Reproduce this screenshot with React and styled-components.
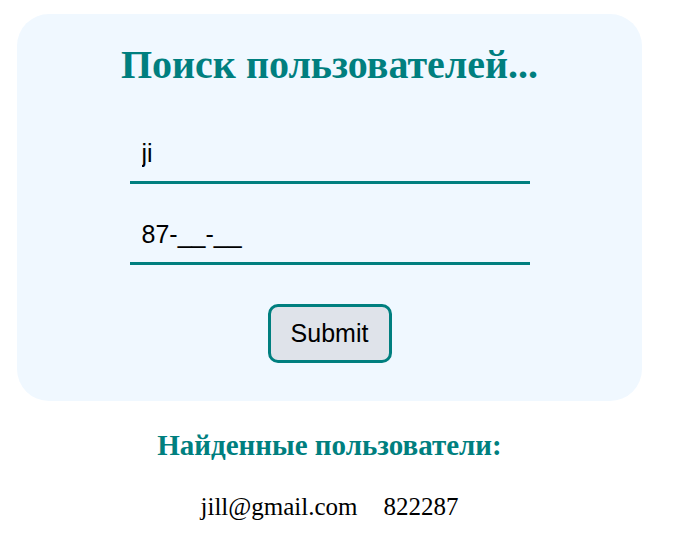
import styled, { createGlobalStyle } from "styled-components";

const GlobalStyle = createGlobalStyle`
    body {
        margin: 0;
        background: #ffffff;
        font-family: "Liberation Serif", "Times New Roman", serif;
    }
`;

const Page = styled.div`
    width: 625px;
    padding: 14px 0 0 17px;
`;

const SearchCard = styled.form`
    display: flex;
    flex-direction: column;
    align-items: center;
    background-color: #f0f8ff;
    border-radius: 32px;
    padding: 28px 0 38px;
`;

const Title = styled.h1`
    margin: 0 0 43px;
    color: #007f7f;
    font-size: 40px;
    font-weight: 700;
    line-height: 46px;
`;

const Field = styled.input`
    box-sizing: border-box;
    width: 400px;
    height: 53px;
    margin-bottom: ${(p) => p.$gap}px;
    padding: 8px 12px 13px;
    border: none;
    border-bottom: 3px solid #007f7f;
    background: transparent;
    color: #000;
    font-family: "Liberation Sans", Arial, sans-serif;
    font-size: 25px;
    outline: none;
`;

const SubmitButton = styled.button`
    box-sizing: border-box;
    width: 124px;
    height: 59px;
    border: 3px solid #007f7f;
    border-radius: 10px;
    background-color: #dfe3ea;
    color: #000;
    font-family: "Liberation Sans", Arial, sans-serif;
    font-size: 25px;
    cursor: pointer;
`;

const Results = styled.div`
    display: flex;
    flex-direction: column;
    align-items: center;
`;

const ResultsTitle = styled.h3`
    margin: 26px 0 0;
    color: #007f7f;
    font-size: 29px;
    font-weight: 700;
    line-height: 36px;
`;

const UserRow = styled.div`
    display: flex;
    gap: 26px;
    margin-top: 29px;
    font-size: 25px;
    line-height: 29px;
    color: #000;
`;

const users = [{ email: "jill@gmail.com", number: "822287" }];

const App = () => {
    return (
        <Page>
            <GlobalStyle />
            <SearchCard onSubmit={(e) => e.preventDefault()}>
                <Title>Поиск пользователей...</Title>
                <Field type="text" name="email" defaultValue="ji" $gap={28} />
                <Field type="text" name="number" defaultValue="87-__-__" $gap={39} />
                <SubmitButton type="submit">Submit</SubmitButton>
            </SearchCard>
            <Results>
                <ResultsTitle>Найденные пользователи:</ResultsTitle>
                {users.map((u, idx) => (
                    <UserRow key={'user-idx' + idx}>
                        <span>{u.email}</span>
                        <span>{u.number}</span>
                    </UserRow>
                ))}
            </Results>
        </Page>
    );
};

export default App;
